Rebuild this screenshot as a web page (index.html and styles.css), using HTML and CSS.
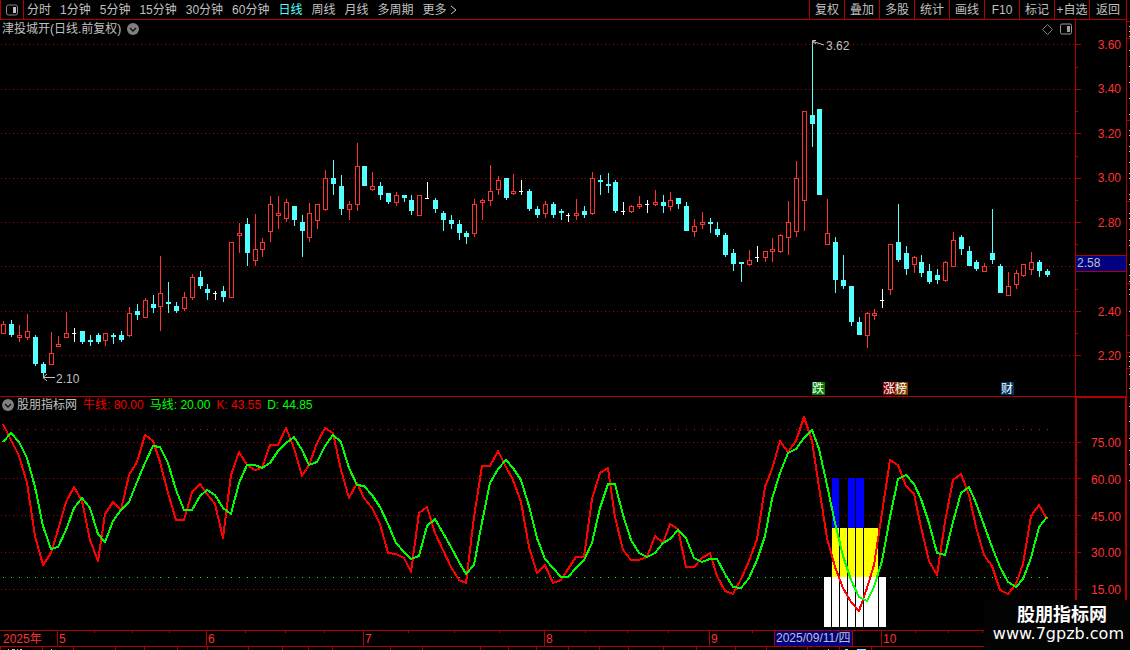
FILE: index.html
```
<!DOCTYPE html>
<html lang="zh-CN">
<head>
    <meta charset="UTF-8" />
    <meta name="viewport" content="width=device-width, initial-scale=1.0" />
    <title>津投城开 日线</title>
    <link rel="stylesheet" href="styles.css">
</head>
<body>
    <div class="terminal">
        <div class="main">
            <header class="toolbar">
                <button class="layout-btn" aria-label="布局">
                    <svg width="12" height="12"><rect x="0.5" y="1" width="11" height="10" rx="2" fill="none" stroke="#888"/><rect x="7" y="3" width="3" height="6" fill="#c0c0c0"/></svg>
                </button>
                <nav class="periods">
                    <button>分时</button>
                    <button>1分钟</button>
                    <button>5分钟</button>
                    <button>15分钟</button>
                    <button>30分钟</button>
                    <button>60分钟</button>
                    <button class="active">日线</button>
                    <button>周线</button>
                    <button>月线</button>
                    <button>多周期</button>
                    <button class="more">更多<svg width="7" height="10"><path d="M1 1L6 5L1 9" fill="none" stroke="#c0c0c0"/></svg></button>
                </nav>
                <div class="tools">
                    <button>复权</button>
                    <button>叠加</button>
                    <button>多股</button>
                    <button>统计</button>
                    <button>画线</button>
                    <button>F10</button>
                    <button>标记</button>
                    <button>+自选</button>
                    <button>返回</button>
                </div>
            </header>

            <section class="pane price-pane">
                <div class="plot">
                    <div class="pane-title">
                        <span>津投城开(日线.前复权)</span>
                        <button class="drop" aria-label="展开"><svg width="12" height="12"><circle cx="6" cy="6" r="6" fill="#808080"/><path d="M3 5L6 8L9 5" fill="none" stroke="#111" stroke-width="1.4"/></svg></button>
                    </div>
                    <div class="pane-icons">
                        <svg width="11" height="11"><path d="M5.5 0.5L10.5 5.5L5.5 10.5L0.5 5.5Z" fill="none" stroke="#808080"/></svg>
                        <svg width="12" height="12"><rect x="0.5" y="1" width="11" height="10" rx="1.5" fill="none" stroke="#999"/><rect x="7" y="3" width="3" height="6" fill="#a0a0a0"/></svg>
                    </div>
                    <svg class="canvas price-canvas" id="priceChart"></svg>
                </div>
                <div class="axis price-axis">
                    <svg class="ticks" id="priceTicks"></svg>
                    <span>3.60</span>
                    <span>3.40</span>
                    <span>3.20</span>
                    <span>3.00</span>
                    <span>2.80</span>
                    <span class="current">2.58</span>
                    <span>2.40</span>
                    <span>2.20</span>
                </div>
            </section>

            <section class="pane kd-pane">
                <div class="plot">
                    <div class="pane-title">
                        <button class="drop" aria-label="展开"><svg width="12" height="12"><circle cx="6" cy="6" r="6" fill="#808080"/><path d="M3 5L6 8L9 5" fill="none" stroke="#111" stroke-width="1.4"/></svg></button>
                        <span class="name">股朋指标网</span>
                        <span class="red">牛线: 80.00</span>
                        <span class="green">马线: 20.00</span>
                        <span class="red">K: 43.55</span>
                        <span class="green">D: 44.85</span>
                    </div>
                    <svg class="canvas kd-canvas" id="kdChart"></svg>
                </div>
                <div class="axis kd-axis">
                    <svg class="ticks" id="kdTicks"></svg>
                    <span>75.00</span>
                    <span>60.00</span>
                    <span>45.00</span>
                    <span>30.00</span>
                    <span>15.00</span>
                </div>
            </section>

            <div class="time-axis">
                <svg class="ticks" id="timeTicks"></svg>
                <div class="months" id="months"></div>
                <span class="cursor-date">2025/09/11/四</span>
            </div>
            <svg class="bottom-strip" id="bottomStrip"></svg>
        </div>
        <svg class="side-strip" id="sideStrip"></svg>

        <div class="watermark">
            <strong>股朋指标网</strong>
            <span>www.7gpzb.com</span>
        </div>
    </div>
    <script src="chart.js"></script>
</body>
</html>
```
FILE: styles.css
```
/* Base */
* {
    box-sizing: border-box;
}

body {
    margin: 0;
    background-color: #000;
    color: #c0c0c0;
    font-family: "Liberation Sans", "Noto Sans CJK SC", sans-serif;
    font-size: 12px;
    line-height: 16px;
}

button {
    margin: 0;
    padding: 0;
    border: none;
    background: none;
    color: inherit;
    font: inherit;
    white-space: nowrap;
    cursor: pointer;
}

svg {
    display: block;
}

.terminal {
    display: flex;
    position: relative;
    overflow: hidden;
}

.main {
    flex: 1;
    min-width: 0;
}

/* Toolbar */
.toolbar {
    display: flex;
    height: 20px;
    border-bottom: 1px solid #b00000;
}

.layout-btn {
    display: flex;
    align-items: center;
    justify-content: center;
    width: 24px;
    border-left: 1px solid #b00000;
    border-right: 1px solid #b00000;
}

.periods {
    display: flex;
    gap: 9px;
    padding-left: 3px;
}

.periods .active {
    color: #54ffff;
}

.more {
    display: flex;
    align-items: center;
    gap: 3px;
}

.tools {
    display: flex;
    margin-left: auto;
}

.tools button {
    width: 35px;
    border-left: 1px solid #b00000;
}

.tools button:last-child {
    width: 37px;
}

/* Panes */
.pane {
    display: flex;
}

.plot {
    flex: 1;
    min-width: 0;
    position: relative;
}

.canvas {
    width: 100%;
}

.price-canvas {
    height: 376px;
}

.kd-canvas {
    height: 233px;
}

.price-pane {
    border-bottom: 1px solid #b00000;
}

.pane-title {
    position: absolute;
    top: 1px;
    left: 2px;
    display: flex;
    align-items: center;
    gap: 6px;
}

.kd-pane .pane-title {
    top: 0;
}

.kd-pane .name {
    margin-left: -3px;
}

.pane-icons {
    position: absolute;
    top: 3px;
    right: 3px;
    display: flex;
    align-items: center;
    gap: 7px;
}

.red {
    color: #f00000;
}

.green {
    color: #00ff00;
}

/* Axes */
.axis {
    position: relative;
    width: 51px;
    display: flex;
    flex-direction: column;
    justify-content: space-between;
    border-left: 1px solid #b00000;
    color: #ff3232;
    text-align: right;
}

.axis span {
    padding-right: 5px;
}

.price-axis {
    padding: 17px 0 32px;
}

/* The current price sits a little above the 2.60 grid line */
.axis .current {
    position: relative;
    height: 17px;
    margin: -4px 0 3px;
    padding: 0 0 0 1px;
    border-top: 1px solid #b00000;
    border-bottom: 1px solid #b00000;
    background-color: #000080;
    color: #c0c0c0;
    text-align: left;
    line-height: 15px;
}

.kd-axis {
    padding: 37px 0 32px;
    border-top: 1px solid #b00000;
    border-left-width: 2px;
    border-right: 1px solid #b00000;
}

.kd-axis span {
    padding-right: 4px;
}

.ticks {
    position: absolute;
    top: 0;
    left: 0;
    width: 100%;
    height: 100%;
}

.time-axis {
    position: relative;
    height: 17px;
    border-top: 1px solid #b00000;
    border-bottom: 1px solid #b00000;
    color: #ff3232;
}

.months {
    display: flex;
    height: 15px;
}

.month {
    flex: none;
    padding-left: 1px;
    border-left: 1px solid #b00000;
}

.month:first-child {
    border-left: none;
    padding-left: 3px;
}

.month:last-child {
    flex: 1;
}

.cursor-date {
    position: absolute;
    left: 774px;
    top: 0;
    width: 79px;
    height: 15px;
    padding-left: 1px;
    border-left: 1px solid #b00000;
    border-right: 1px solid #b00000;
    background-color: #000080;
    color: #c0c0c0;
    line-height: 15px;
}

.bottom-strip {
    width: 100%;
    height: 3px;
}

.side-strip {
    flex: none;
    width: 4px;
    height: 650px;
    border-left: 1px solid #b00000;
}

/* Watermark */
.watermark {
    position: absolute;
    right: 0;
    bottom: 0;
    width: 146px;
    height: 50px;
    padding: 5px 6px;
    display: flex;
    flex-direction: column;
    align-items: flex-end;
    background-color: #030303;
    color: #fff;
}

.watermark strong {
    padding-right: 17px;
    font-size: 18px;
    line-height: 20px;
}

.watermark span {
    font-family: "DejaVu Sans", sans-serif;
    font-size: 16px;
    line-height: 18px;
}
```
FILE: chart.js
```
const NS = 'http://www.w3.org/2000/svg';
const RED = '#ff3232';
const CYAN = '#54ffff';
const LINE = '#b00000';

// type, high, body top, body bottom, low (r = up, c = down, w = flat)
const candles = `
r 321 324 334 334|c 320 324 335 337|r 325 335 338 342|r 314 331 338 340|c 335 337 364 366
c 362 364 373 378|r 332 353 365 365|r 336 344 347 347|r 312 333 338 338|w 328 333 334 342
c 331 331 342 344|c 335 340 342 346|c 333 335 342 344|r 333 333 341 346|c 333 335 337 344
c 331 335 340 342|r 307 313 336 337|c 304 311 315 320|r 298 300 318 318|c 295 304 308 313
r 256 293 307 331|c 282 302 304 313|c 302 306 311 313|r 292 297 309 311|r 274 277 298 300
c 271 277 286 289|c 284 289 293 300|w 291 293 294 300|c 286 291 297 302|r 242 242 298 298
r 223 233 236 253|c 218 224 253 266|r 214 249 261 266|r 238 242 250 257|r 196 204 232 242
r 196 213 216 229|r 199 202 219 222|c 206 206 220 226|c 215 222 231 257|r 203 213 238 242
r 204 204 221 229|r 170 178 210 211|c 160 178 184 195|c 175 186 209 215|r 201 204 210 220
r 143 166 205 211|c 166 166 186 186|r 172 186 190 191|c 182 186 195 200|c 193 193 202 204
r 192 195 203 206|c 195 195 198 202|c 195 200 211 215|r 195 195 216 216|w 182 198 199 199
c 198 200 209 213|c 211 213 220 231|c 215 220 224 229|c 220 224 233 240|c 231 233 237 244
r 199 204 234 237|r 199 200 203 220|r 165 191 201 206|r 176 180 190 195|c 178 178 198 200
r 174 191 194 195|w 180 191 192 195|c 189 191 209 211|c 206 209 215 218|r 201 204 214 218
c 202 204 215 218|c 209 211 213 220|w 213 215 216 222|r 199 213 216 220|c 206 211 215 218
r 172 178 214 215|c 175 180 182 195|c 173 184 186 193|c 180 182 211 213|w 202 211 212 215
r 205 206 212 213|r 196 204 207 209|w 200 204 205 213|r 190 202 205 206|c 195 202 206 213
r 192 200 207 211|c 198 198 204 209|c 202 206 231 231|r 219 226 232 237|r 212 222 225 229
c 218 222 224 233|c 222 229 235 237|c 233 235 255 257|c 249 253 264 271|c 262 262 264 282
r 250 260 265 266|w 246 257 258 262|r 251 251 258 262|r 238 249 252 262|r 234 235 252 253
r 201 222 238 255|r 161 178 232 237|r 111 111 201 231|c 41 115 124 147|c 109 109 195 195
r 199 233 245 245|c 237 242 280 293|c 255 280 286 289|c 286 286 322 326|c 317 322 335 335
r 312 313 336 348|r 309 313 316 320|w 289 300 301 308|r 244 244 290 295|c 204 242 260 262
c 246 253 269 275|r 256 257 265 273|c 255 262 273 277|c 264 271 282 284|c 269 275 280 284
r 261 262 281 282|r 232 240 267 267|c 235 237 249 255|c 246 251 266 266|c 260 262 269 271
r 263 266 272 272|c 209 253 260 264|c 264 266 293 293|r 272 286 296 296|r 270 273 285 289
r 264 264 276 277|r 252 262 270 275|c 260 262 271 277|c 269 271 275 277
`.trim().split(/[|\n]/).map(s => s.split(' '));

const kLine = [
    424, 440, 456, 483, 536, 565, 553, 530, 502, 487, 501, 540, 561, 514, 502, 510, 475, 462, 435, 441,
    462, 493, 520, 520, 492, 484, 494, 504, 538, 475, 452, 465, 470, 468, 445, 445, 428, 448, 476, 465,
    443, 428, 433, 470, 498, 483, 498, 508, 524, 553, 554, 558, 572, 513, 507, 533, 550, 567, 580, 583,
    517, 466, 466, 451, 467, 480, 502, 547, 573, 565, 583, 580, 569, 557, 557, 499, 473, 468, 517, 550,
    560, 560, 557, 536, 543, 524, 529, 567, 567, 558, 553, 576, 591, 594, 579, 561, 539, 487, 469, 441,
    452, 441, 417, 441, 487, 538, 567, 588, 602, 611, 588, 565, 513, 460, 465, 486, 494, 527, 561, 575,
    522, 480, 474, 495, 527, 555, 566, 590, 594, 584, 564, 516, 505, 519
];

const dLine = [
    442, 433, 442, 458, 487, 526, 549, 547, 530, 508, 498, 508, 534, 542, 521, 510, 502, 482, 463, 446,
    447, 463, 490, 510, 510, 496, 490, 495, 508, 514, 483, 465, 465, 468, 463, 451, 443, 437, 450, 465,
    462, 446, 435, 442, 468, 485, 486, 495, 507, 524, 543, 552, 559, 556, 526, 519, 533, 547, 562, 574,
    565, 522, 483, 469, 460, 468, 480, 506, 538, 559, 568, 577, 577, 568, 560, 543, 508, 484, 484, 515,
    540, 553, 557, 553, 543, 539, 530, 538, 558, 562, 559, 559, 574, 587, 588, 578, 560, 536, 499, 473,
    453, 449, 438, 430, 449, 485, 523, 556, 580, 597, 601, 587, 561, 517, 479, 475, 484, 499, 523, 553,
    555, 522, 493, 487, 503, 525, 547, 567, 582, 587, 579, 558, 527, 517
];

const barX = i => Math.floor(3.97 + 7.846 * i);

function add(parent, tag, attrs, text) {
    const el = document.createElementNS(NS, tag);
    for (const key in attrs) el.setAttribute(key, attrs[key]);
    if (text) el.textContent = text;
    parent.appendChild(el);
    return el;
}

function rect(parent, x, y, width, height, fill) {
    return add(parent, 'rect', { x, y, width, height, fill, 'shape-rendering': 'crispEdges' });
}

function layer(id, top) {
    return add(document.getElementById(id), 'g', { transform: `translate(0 ${-top})` });
}

function gridLine(parent, y) {
    add(parent, 'line', { x1: 1, x2: '100%', y1: y + 0.5, y2: y + 0.5, stroke: '#b00000', 'stroke-dasharray': '1 3' });
}

// Price pane
const price = layer('priceChart', 20);
[44, 89, 133, 178, 222, 266, 311, 355].forEach(y => gridLine(price, y));

candles.forEach(([type, ...v], i) => {
    const [high, top, bottom, low] = v.map(Number);
    const x = barX(i);
    if (type === 'r') {
        rect(price, x, high, 1, top - high, RED);
        rect(price, x, bottom, 1, low - bottom, RED);
        rect(price, x - 2, top, 5, bottom - top, RED);
        rect(price, x - 1, top + 1, 3, bottom - top - 2, '#000');
    } else {
        const color = type === 'c' ? CYAN : '#fff';
        rect(price, x, high, 1, low - high, color);
        rect(price, x - 2, top, type === 'c' ? 5 : 4, bottom - top, color);
    }
});

// High and low marks
add(price, 'path', { d: 'M812.5 46V40.5H816M813 41.5L824 45M813 42L816 44', fill: 'none', stroke: '#c0c0c0' });
add(price, 'text', { x: 826, y: 50, fill: '#c0c0c0' }, '3.62');
add(price, 'path', { d: 'M43 377.5H55M47 374L43 377.5L47 381', fill: 'none', stroke: '#c0c0c0' });
add(price, 'text', { x: 56, y: 383, fill: '#c0c0c0' }, '2.10');

// Event tags
[[812, '跌', '#008000'], [883, '涨', '#800000'], [895, '榜', '#804000'], [1001, '财', '#003468']].forEach(([x, label, fill]) => {
    rect(price, x, 382, 13, 13, fill);
    add(price, 'text', { x, y: 393, fill: '#fff' }, label);
});

// Indicator pane
const kd = layer('kdChart', 397);
[442, 478, 515, 552, 589].forEach(y => gridLine(kd, y));
candles.forEach((c, i) => {
    rect(kd, barX(i), 429, 1, 1, '#ff0000');
    rect(kd, barX(i), 577, 1, 1, '#00ff00');
});

[[832, 7], [848, 7], [856, 8]].forEach(([x, w]) => rect(kd, x, 478, w, 50, '#0000ff'));
[[832, 7], [840, 7], [848, 7], [856, 7], [864, 14]].forEach(([x, w]) => rect(kd, x, 528, w, 49, '#ffff00'));
[[824, 7], [832, 7], [840, 7], [848, 7], [856, 7], [864, 14], [879, 7]].forEach(([x, w]) => rect(kd, x, 577, w, 50, '#ffffff'));

[[kLine, '#ff0000'], [dLine, '#00ff00']].forEach(([data, stroke]) => {
    const points = data.map((y, i) => `${barX(i)},${y}`).join(' ');
    add(kd, 'polyline', { points, fill: 'none', stroke, 'stroke-width': 2, 'stroke-linejoin': 'round', 'shape-rendering': 'crispEdges' });
});

// Axis ticks
const priceTicks = layer('priceTicks', 20);
[44, 89, 133, 178, 222, 266, 311, 355].forEach(y => rect(priceTicks, 0, y, 5, 1, LINE));
[67, 111, 156, 200, 244, 289, 333].forEach(y => rect(priceTicks, 0, y, 2, 1, LINE));
const kdTicks = layer('kdTicks', 398);
[442, 478, 515, 552, 589].forEach(y => rect(kdTicks, 0, y, 4, 1, LINE));
[460, 497, 534, 571].forEach(y => rect(kdTicks, 0, y, 1, 1, LINE));

// Months, each as wide as its trading days
const monthRow = document.getElementById('months');
const months = [['2025年', 0], ['5', 7], ['6', 26], ['7', 46], ['8', 69], ['9', 90], ['10', 112]];
const monthX = i => (i ? barX(i) - 1 : 0);
months.forEach(([label, start], i) => {
    const span = document.createElement('span');
    span.className = 'month';
    span.textContent = label;
    if (months[i + 1]) span.style.width = monthX(months[i + 1][1]) - monthX(start) + 'px';
    monthRow.appendChild(span);
});
const timeTicks = document.getElementById('timeTicks');
[94, 132, 169, 245, 285, 324, 408, 454, 499, 585, 627, 668, 752, 915, 948, 982].forEach(x => rect(timeTicks, x, 0, 1, 2, LINE));

// Edges of the neighbouring panels
const strip = document.getElementById('bottomStrip');
[0, 42, 73, 115, 144, 177, 207, 248, 282, 308, 332, 390, 422, 480, 508, 536, 568, 599, 628, 663, 696, 735, 766, 807, 839, 871].forEach(x => rect(strip, x, 0, 1, 3, LINE));
[[8, 1], [12, 3], [17, 1], [20, 2], [51, 1], [828, 1]].forEach(([x, w]) => rect(strip, x, 2, w, 1, '#c0c0c0'));
[[845, 3], [857, 9]].forEach(([x, w]) => rect(strip, x, 2, w, 1, CYAN));

const side = document.getElementById('sideStrip');
[21, 38, 120, 201, 283, 335, 352, 368].forEach(y => rect(side, 0, y, 3, 1, LINE));
[26, 31, 36, 50, 66, 82, 98, 114, 130, 135, 146, 151, 162, 173, 178, 194, 199, 213, 218, 229, 240, 245, 264, 275, 281, 289, 294, 311, 356, 361, 366, 374, 388, 406, 421, 438, 450, 464, 480].forEach(y => rect(side, 2, y, 1, 1, '#c0c0c0'));
```
